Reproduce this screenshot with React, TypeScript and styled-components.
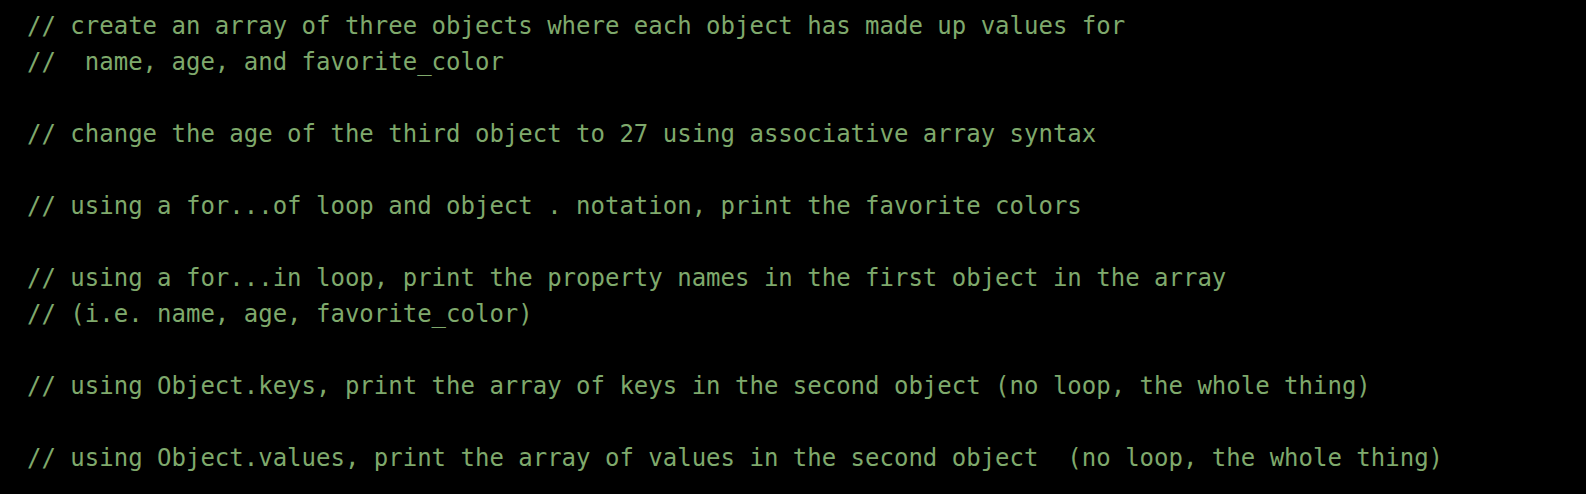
import React from "react";
import styled, { createGlobalStyle } from "styled-components";

const GlobalStyle = createGlobalStyle`
  html, body {
    margin: 0;
    padding: 0;
    background: #000000;
  }
`;

const Editor = styled.pre`
  margin: 0;
  box-sizing: border-box;
  width: 1586px;
  height: 494px;
  padding: 8px 0 0 27px;
  background: #000000;
  overflow: hidden;
`;

const Line = styled.div`
  font-family: "DejaVu Sans Mono", "Liberation Mono", monospace;
  font-size: 24px;
  line-height: 36px;
  height: 36px;
  color: #7fa96c;
  white-space: pre;
`;

const lines = [
  "// create an array of three objects where each object has made up values for",
  "//  name, age, and favorite_color",
  "",
  "// change the age of the third object to 27 using associative array syntax",
  "",
  "// using a for...of loop and object . notation, print the favorite colors",
  "",
  "// using a for...in loop, print the property names in the first object in the array",
  "// (i.e. name, age, favorite_color)",
  "",
  "// using Object.keys, print the array of keys in the second object (no loop, the whole thing)",
  "",
  "// using Object.values, print the array of values in the second object  (no loop, the whole thing)",
];

export default function App() {
  return (
    <>
      <GlobalStyle />
      <Editor>
        {lines.map((l, i) => (
          <Line key={i}>{l}</Line>
        ))}
      </Editor>
    </>
  );
}
